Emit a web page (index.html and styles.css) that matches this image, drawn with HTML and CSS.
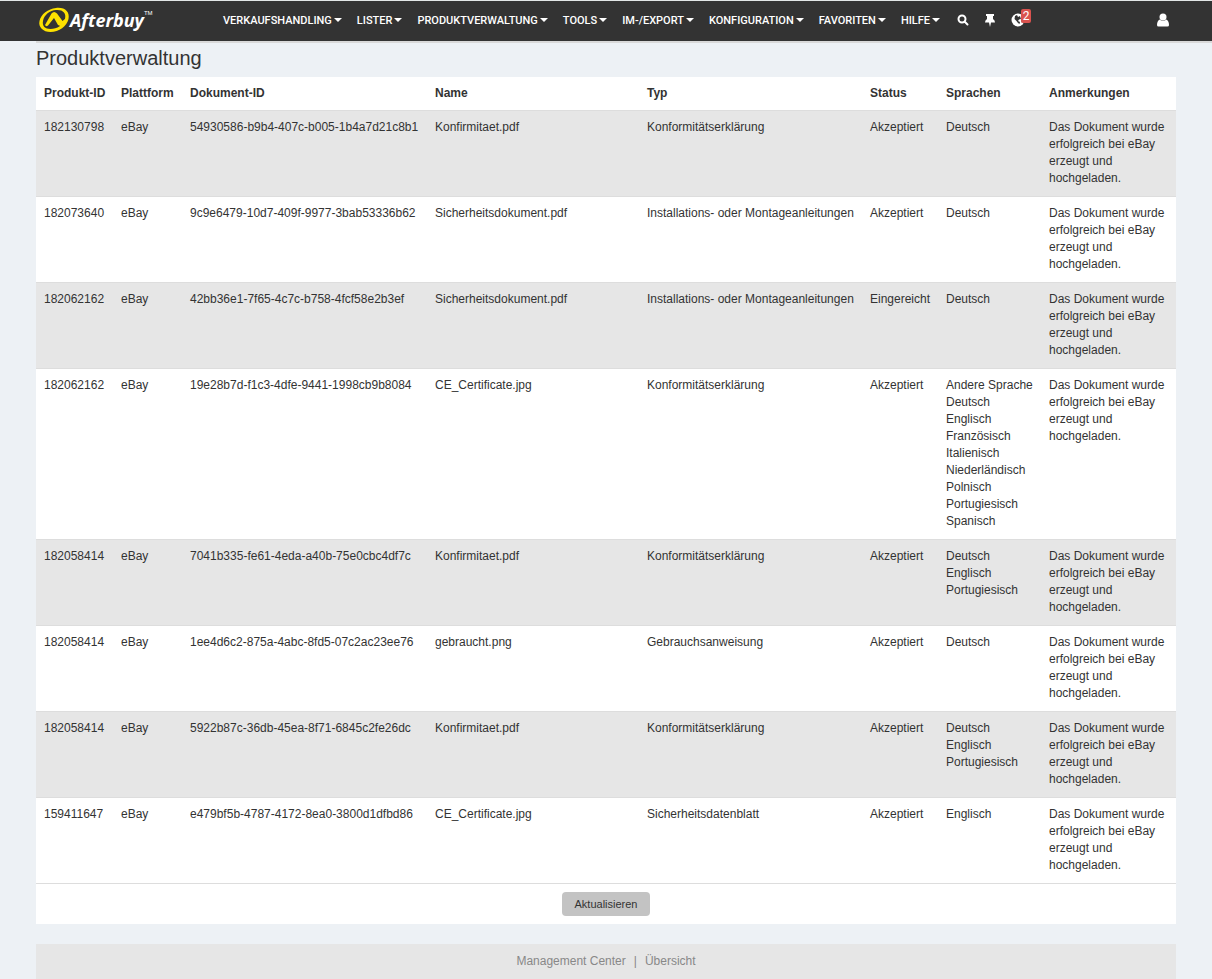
FILE: index.html
```html
<!DOCTYPE html>
<html lang="de">
<head>
<meta charset="utf-8">
<meta name="viewport" content="width=device-width, initial-scale=1">
<title>Afterbuy – Produktverwaltung</title>
<link rel="stylesheet" href="styles.css">
</head>
<body>
<header class="navbar">
  <a class="brand" href="#" aria-label="Afterbuy">
    <svg class="brand-mark" viewBox="0 0 32 26" aria-hidden="true">
      <path fill="#fde100" fill-rule="evenodd" d="M18 1C27 0 32 5 30.500 12C29 19 21 25 12.500 25C5 25 0 20 1.500 14C3 7 10 2 18 1ZM18 3C12 3 6 8 5 14C4 19 7 22 12.500 22C19 22 25.500 18 27 12C28.500 6 25 2.500 18 3Z"/>
      <path fill="#fde100" d="M7 18L13.500 6.500Q16 3.500 19 6.500L24.500 14L29.500 10L27 16L23.500 19.500L20 18L16 11L10 18.500Q8 20 7 18Z"/>
    </svg>
    <span class="brand-name">Afterbuy</span><span class="brand-tm">TM</span>
  </a>
  <nav class="menu">
    <a class="menu-item" href="#">VERKAUFSHANDLING</a>
    <a class="menu-item" href="#">LISTER</a>
    <a class="menu-item" href="#">PRODUKTVERWALTUNG</a>
    <a class="menu-item" href="#">TOOLS</a>
    <a class="menu-item" href="#">IM-/EXPORT</a>
    <a class="menu-item" href="#">KONFIGURATION</a>
    <a class="menu-item" href="#">FAVORITEN</a>
    <a class="menu-item" href="#">HILFE</a>
  </nav>
  <div class="tools">
    <button class="tool" type="button" aria-label="Suche">
      <svg class="tool-icon" viewBox="0 0 12 14" aria-hidden="true"><circle cx="5" cy="6" r="3.500" fill="none" stroke="#fff" stroke-width="2"/><path d="M7.500 8.500L10.500 11.500" stroke="#fff" stroke-width="2" stroke-linecap="round"/></svg>
    </button>
    <button class="tool" type="button" aria-label="Anheften">
      <svg class="tool-icon" viewBox="0 0 12 14" aria-hidden="true"><path fill="#fff" d="M2 1H10V3H9V6Q11 7 11 9.500H7L6 14L5 9.500H1Q1 7 3 6V3H2Z"/></svg>
    </button>
    <button class="tool" type="button" aria-label="Benachrichtigungen">
      <svg class="tool-icon tool-icon-wide" viewBox="0 0 14 14" aria-hidden="true"><circle cx="7" cy="7" r="6.500" fill="#fff"/><path fill="#333" d="M4 3L6 2L7 4L9 3L10 6L8 6.500L7 8L9 9L8.500 11L7 10L5.500 8L3.500 6ZM10.500 8L12.500 7L12 9L10.500 9.500Z"/></svg>
      <span class="count">2</span>
    </button>
  </div>
  <button class="tool user" type="button" aria-label="Benutzerkonto">
    <svg class="tool-icon" viewBox="0 0 12 14" aria-hidden="true"><circle cx="6" cy="4" r="3.500" fill="#fff"/><path fill="#fff" d="M2.500 6.500Q6 9 9.500 6.500Q12 8 12 12Q12 13.500 10.500 13.500H1.500Q0 13.500 0 12Q0 8 2.500 6.500Z"/></svg>
  </button>
</header>
<main class="content">
  <h1 class="title">Produktverwaltung</h1>
  <section class="panel">
    <table class="documents">
      <colgroup><col class="col-product"><col class="col-platform"><col class="col-document"><col class="col-name"><col class="col-type"><col class="col-status"><col class="col-languages"><col class="col-notes"></colgroup>
      <thead>
        <tr><th>Produkt-ID</th><th>Plattform</th><th>Dokument-ID</th><th>Name</th><th>Typ</th><th>Status</th><th>Sprachen</th><th>Anmerkungen</th></tr>
      </thead>
      <tbody>
        <tr><td>182130798</td><td>eBay</td><td>54930586-b9b4-407c-b005-1b4a7d21c8b1</td><td>Konfirmitaet.pdf</td><td>Konformitätserklärung</td><td>Akzeptiert</td><td>Deutsch</td><td>Das Dokument wurde erfolgreich bei eBay erzeugt und hochgeladen.</td></tr>
        <tr><td>182073640</td><td>eBay</td><td>9c9e6479-10d7-409f-9977-3bab53336b62</td><td>Sicherheitsdokument.pdf</td><td>Installations- oder Montageanleitungen</td><td>Akzeptiert</td><td>Deutsch</td><td>Das Dokument wurde erfolgreich bei eBay erzeugt und hochgeladen.</td></tr>
        <tr><td>182062162</td><td>eBay</td><td>42bb36e1-7f65-4c7c-b758-4fcf58e2b3ef</td><td>Sicherheitsdokument.pdf</td><td>Installations- oder Montageanleitungen</td><td>Eingereicht</td><td>Deutsch</td><td>Das Dokument wurde erfolgreich bei eBay erzeugt und hochgeladen.</td></tr>
        <tr><td>182062162</td><td>eBay</td><td>19e28b7d-f1c3-4dfe-9441-1998cb9b8084</td><td>CE_Certificate.jpg</td><td>Konformitätserklärung</td><td>Akzeptiert</td><td>Andere Sprache<br>Deutsch<br>Englisch<br>Französisch<br>Italienisch<br>Niederländisch<br>Polnisch<br>Portugiesisch<br>Spanisch</td><td>Das Dokument wurde erfolgreich bei eBay erzeugt und hochgeladen.</td></tr>
        <tr><td>182058414</td><td>eBay</td><td>7041b335-fe61-4eda-a40b-75e0cbc4df7c</td><td>Konfirmitaet.pdf</td><td>Konformitätserklärung</td><td>Akzeptiert</td><td>Deutsch<br>Englisch<br>Portugiesisch</td><td>Das Dokument wurde erfolgreich bei eBay erzeugt und hochgeladen.</td></tr>
        <tr><td>182058414</td><td>eBay</td><td>1ee4d6c2-875a-4abc-8fd5-07c2ac23ee76</td><td>gebraucht.png</td><td>Gebrauchsanweisung</td><td>Akzeptiert</td><td>Deutsch</td><td>Das Dokument wurde erfolgreich bei eBay erzeugt und hochgeladen.</td></tr>
        <tr><td>182058414</td><td>eBay</td><td>5922b87c-36db-45ea-8f71-6845c2fe26dc</td><td>Konfirmitaet.pdf</td><td>Konformitätserklärung</td><td>Akzeptiert</td><td>Deutsch<br>Englisch<br>Portugiesisch</td><td>Das Dokument wurde erfolgreich bei eBay erzeugt und hochgeladen.</td></tr>
        <tr><td>159411647</td><td>eBay</td><td>e479bf5b-4787-4172-8ea0-3800d1dfbd86</td><td>CE_Certificate.jpg</td><td>Sicherheitsdatenblatt</td><td>Akzeptiert</td><td>Englisch</td><td>Das Dokument wurde erfolgreich bei eBay erzeugt und hochgeladen.</td></tr>
      </tbody>
    </table>
    <div class="actions"><button class="refresh" type="button">Aktualisieren</button></div>
  </section>
  <footer class="footer"><a href="#">Management Center</a><span>|</span><a href="#">Übersicht</a></footer>
</main>
</body>
</html>
```
FILE: styles.css
```css
* { box-sizing: border-box; }

body {
  margin: 0;
  background: #edf1f5;
  color: #333;
  font: 12px/17px "Liberation Sans", Arial, sans-serif;
}

a { color: inherit; text-decoration: none; }
button { border: 0; padding: 0; font: inherit; color: inherit; cursor: pointer; }

.navbar {
  display: flex;
  align-items: center;
  height: 41px;
  padding: 0 43px 2px 38px;
  border-top: 1px solid #e2e6e6;
  background: #333;
  color: #fff;
}

.brand { display: flex; align-items: center; width: 185px; }
.brand-mark { width: 32px; height: 26px; }
.brand-name { font: italic 700 18px/26px "Open Sans", sans-serif; }
.brand-tm { align-self: flex-start; font-size: 6px; line-height: 12px; }

.menu { display: flex; gap: 15px; font: 500 11px/17px Roboto, sans-serif; }
.menu-item { display: flex; align-items: center; gap: 2px; white-space: nowrap; }
.menu-item::after {
  content: "";
  border: 4px solid transparent;
  border-top-color: #fff;
  border-bottom: 0;
}

.tools { display: flex; gap: 15px; margin-left: 17px; }
.tool { position: relative; display: flex; background: none; }
.tool-icon { width: 12px; height: 14px; }
.tool-icon-wide { width: 14px; }
.user { margin-left: auto; }

.count {
  position: absolute;
  top: -4px;
  left: 10px;
  width: 10px;
  border-radius: 2px;
  background: #d9534f;
  color: #fff;
  font: 12px/14px Roboto, sans-serif;
}

.content { margin-left: 36px; padding-right: 36px; border-top: 2px solid #d9d9d9; }

.title {
  margin: 0;
  padding: 3px 0 7px;
  font-size: 20px;
  font-weight: 400;
  line-height: 24px;
}

.panel { background: #fff; }

.documents { width: 100%; border-collapse: collapse; table-layout: fixed; }
.documents th { padding: 8px; text-align: left; white-space: nowrap; }
.documents td { padding: 8px 8px 9px; border-top: 1px solid #ddd; vertical-align: top; }
.documents tbody tr:nth-child(odd) { background: #e6e6e6; }

.col-product { width: 77px; }
.col-platform { width: 69px; }
.col-document { width: 245px; }
.col-type { width: 223px; }
.col-status { width: 76px; }
.col-languages { width: 103px; }
.col-notes { width: 135px; }

.actions { display: flex; justify-content: center; padding: 8px; border-top: 1px solid #ddd; }
.refresh { padding: 0 13px; border-radius: 4px; background: #c3c3c3; font-size: 11px; line-height: 24px; }

.footer {
  display: flex;
  justify-content: center;
  gap: 8px;
  margin-top: 20px;
  padding: 9px 0 11px;
  background: #e6e6e6;
  color: #888;
}
```
